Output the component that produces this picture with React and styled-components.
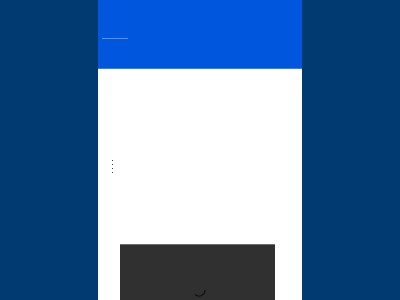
import React from "react";
import styled, { createGlobalStyle, keyframes } from "styled-components";

const GlobalStyle = createGlobalStyle`
  html, body {
    margin: 0;
    padding: 0;
    background: #003a70;
    font-family: "Liberation Sans", Arial, sans-serif;
  }
`;

const Page = styled.div`
  width: 204px;
  height: 300px;
  margin: 0 auto;
  background: #ffffff;
  display: flex;
  flex-direction: column;
  overflow: hidden;
`;

const Header = styled.header`
  height: 68px;
  background: #0056dc;
  border-bottom: 1px solid #3b7cea;
  padding: 38px 0 0 4px;
  box-sizing: content-box;
  height: 30px;
`;

const TitleLine = styled.div`
  width: 26px;
  height: 1px;
  background: #5d8fe3;
`;

const Body = styled.main`
  flex: 1;
  display: flex;
  flex-direction: column;
`;

const Dots = styled.div`
  display: flex;
  flex-direction: column;
  gap: 3px;
  margin: 91px 0 0 14px;
`;

const Dot = styled.span`
  width: 1px;
  height: 1px;
  background: #444;
`;

const Player = styled.div`
  margin: 71px 0 0 22px;
  width: 155px;
  flex: 1;
  background: #303030;
  border-top: 1px solid #6e6e6e;
  display: flex;
  justify-content: center;
  align-items: flex-start;
  padding-top: 38px;
`;

const Spinner = styled.svg`
  width: 14px;
  height: 14px;
  margin-left: 2px;
`;

export default function App() {
  return (
    <>
      <GlobalStyle />
      <Page>
        <Header>
          <TitleLine />
        </Header>
        <Body>
          <Dots>
            {[0, 1, 2, 3].map((i) => (
              <Dot key={i} />
            ))}
          </Dots>
          <Player>
            <Spinner viewBox="0 0 14 14">
              <path d="M13 7 A6 6 0 0 1 3 11.5" fill="none" stroke="#111" strokeWidth="1.2" />
            </Spinner>
          </Player>
        </Body>
      </Page>
    </>
  );
}
